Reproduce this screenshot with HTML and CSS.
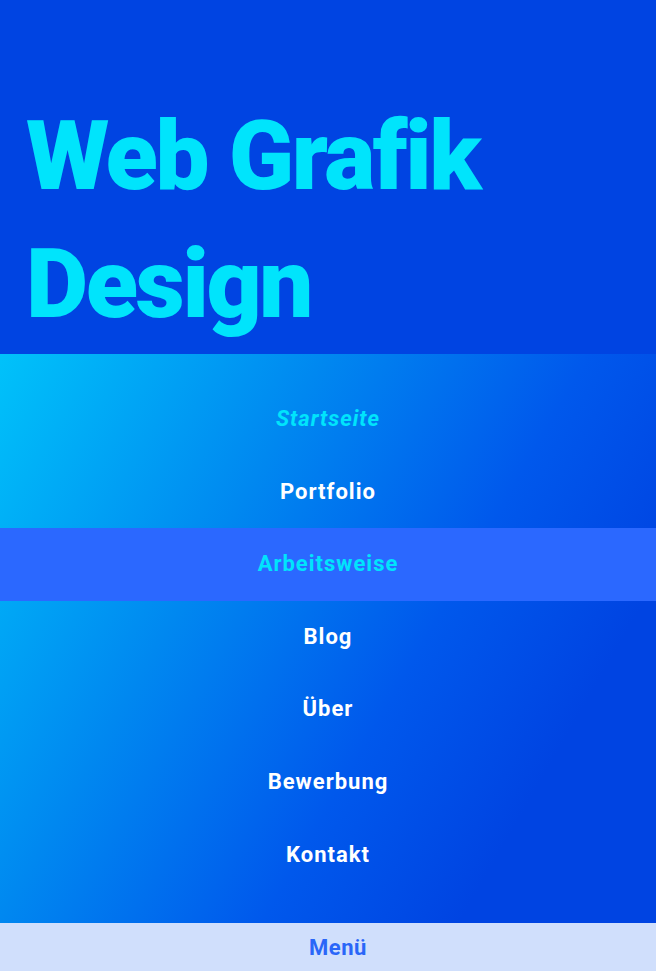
FILE: index.html
```html
<!DOCTYPE html>
<html lang="de">
<head>
    <meta charset="UTF-8">
    <meta name="viewport" content="width=device-width, initial-scale=1.0">
    <title>Web Grafik Design</title>
    <link rel="stylesheet" href="styles.css">
</head>
<body>
    <header class="site-header">
        <h1 class="site-title">Web Grafik Design</h1>
    </header>
    <nav class="main-nav">
        <ul class="nav-list">
            <li><a href="#" class="nav-link current">Startseite</a></li>
            <li><a href="#" class="nav-link">Portfolio</a></li>
            <li><a href="#" class="nav-link hover">Arbeitsweise</a></li>
            <li><a href="#" class="nav-link">Blog</a></li>
            <li><a href="#" class="nav-link">Über</a></li>
            <li><a href="#" class="nav-link">Bewerbung</a></li>
            <li><a href="#" class="nav-link">Kontakt</a></li>
        </ul>
    </nav>
    <div class="menu-bar">
        <button type="button" class="menu-button">Menü</button>
    </div>
</body>
</html>
```

FILE: styles.css
```css
/* Farben */
:root {
    --color-blue-dark: #0044e2;
    --color-cyan: #00e4fc;
    --color-hover: #2b68ff;
    --color-menu-bg: #d0dffc;
    --color-menu-text: #2a66f8;
}

body {
    margin: 0;
    padding: 0;
    font-family: Roboto, "Noto Sans", sans-serif;
    background-color: var(--color-menu-bg);
}

.site-header {
    background-color: var(--color-blue-dark);
    padding: 92px 20px 6px 26px;
}
.site-title {
    margin: 0;
    width: 560px;
    font-size: 96px;
    line-height: 128px;
    font-weight: 900;
    letter-spacing: -2.4px;
    color: var(--color-cyan);
}

/* Navigation mit Verlauf */
.main-nav {
    background: linear-gradient(120deg, #00c2fa 0%, #0088f0 33%, #0058ec 60%, #0044e2 80%);
    padding: 29px 0 32px;
}
.nav-list {
    list-style: none;
    margin: 0;
    padding: 0;
}
.nav-link {
    display: block;
    height: 72.6px;
    line-height: 72.6px;
    text-align: center;
    text-decoration: none;
    color: white;
    font-size: 22px;
    font-weight: 700;
    letter-spacing: 1px;
}
.nav-link.current {
    color: var(--color-cyan);
    font-style: italic;
}
.nav-link.hover {
    background-color: var(--color-hover);
    color: var(--color-cyan);
}

.menu-bar {
    background-color: var(--color-menu-bg);
    height: 48px;
    display: flex;
    justify-content: center;
    align-items: center;
    padding-left: 20px;
}
.menu-button {
    border: none;
    background: none;
    padding: 0;
    font-family: inherit;
    font-size: 22px;
    font-weight: 700;
    letter-spacing: 0.5px;
    color: var(--color-menu-text);
    cursor: pointer;
}
```
